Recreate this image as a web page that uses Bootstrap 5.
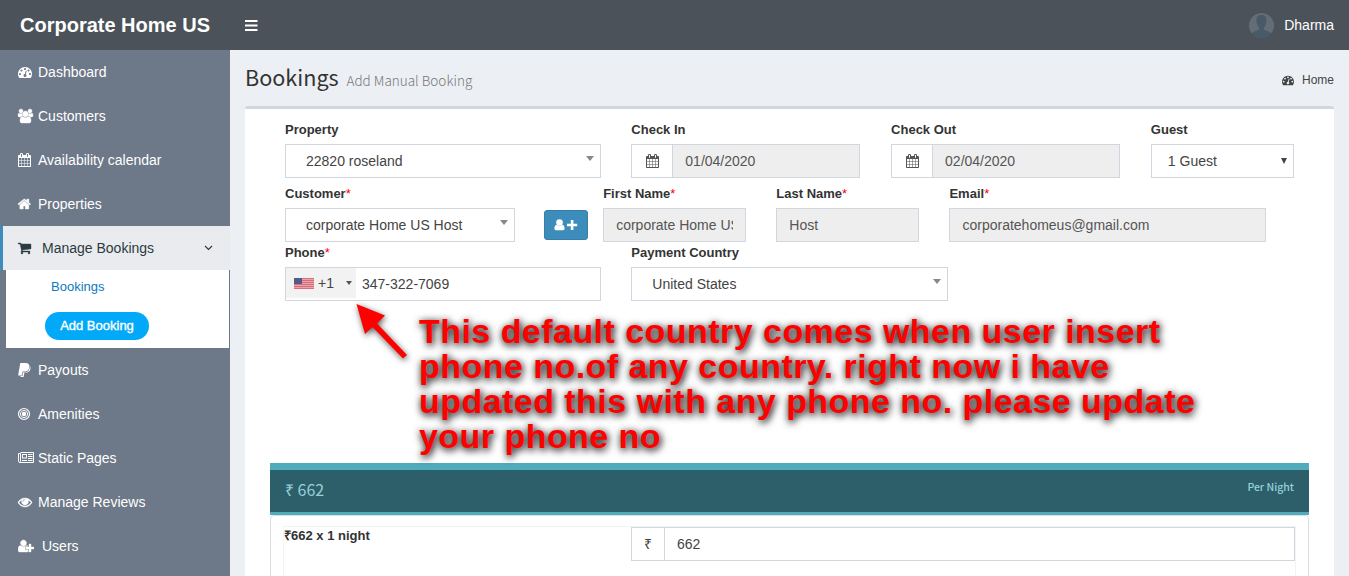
<!DOCTYPE html>
<html lang="en">
<head>
<meta charset="utf-8">
<title>Corporate Home US - Bookings</title>
<meta name="viewport" content="width=device-width, initial-scale=1">
<link href="https://cdn.jsdelivr.net/npm/bootstrap@5.3.0/dist/css/bootstrap.min.css" rel="stylesheet">
<style>
body{font:14px/20px "Liberation Sans",Arial,sans-serif;color:#333;background:#ecf0f5;height:576px;overflow:hidden}
a{text-decoration:none;color:inherit}
.topbar{height:50px;background:#4b5259;color:#fff}
.brand{width:230px;padding-left:20px;font-size:20px;font-weight:700}
.burger{width:13px;height:11px;margin-left:15px}
.user-name{margin:0 15px 0 10px}
.fa{height:14px;width:auto;fill:currentColor;flex:none;display:block;overflow:visible}
.fa.solid{stroke:currentColor;stroke-width:50}
.shell{height:526px}
.sidebar{width:230px;background:#6d7888;color:#fff;flex:none}
.side-link{height:44px;padding-left:18px;display:flex;align-items:center}
.side-ico{width:20px;flex:none}
.side-link.wide .side-ico{width:24px}
.side-link.current{background:#e9ebee;color:#2c3b41;border-left:3px solid #3c8dbc;padding-left:15px}
.submenu{height:78px;margin:0 1px 0 6px;background:#fff;font-size:13px}
.submenu .sub-item{padding:7px 0 0 45px;color:#0b7bbf}
.pill{margin:15px 0 0 39px;width:104px;height:28px;border-radius:14px;background:#03a9f9;color:#fff;-webkit-text-stroke:.35px #fff}
.main{padding:0 15px;min-width:0}
.page-head{height:56px}
.page-head h1{font:21.600px/26px "Noto Sans CJK SC",sans-serif;color:#333;padding-top:14px;margin:0}
.page-head small{font-size:13.500px;font-weight:300;color:#777;margin-left:3px}
.crumb{font-size:12px;color:#444;padding-top:20px;gap:8px}
.panel-box{height:480px;border-top:3px solid #d2d6de;border-radius:3px 3px 0 0;background:#fff;padding:10px 25px 0;position:relative}
.form-rows .row{--bs-gutter-x:30px;margin:0}
.row-a{height:64px}.row-b{height:59px}.row-c{height:221px}
label{display:block;font-size:13px;font-weight:700;padding-top:1px;margin-bottom:4px}
.rate-grid label{padding:0;margin-top:-1px}
label i{color:#f00;font-weight:400;font-style:normal}
.ctl{height:34px;border:1px solid #d2d6de;background:#fff;color:#444;display:flex;align-items:center;padding:0 12px;white-space:nowrap;overflow:hidden}
.ctl.off{background:#eee;color:#555}
.ctl.pick{padding:0 6px 0 20px;justify-content:space-between}
.ctl.date{margin-right:.75px}
.ctl input{border:0;padding:0;width:100%;background:none;color:inherit;font:inherit;outline:0}
.tri{width:0;height:0;border:4px solid transparent;border-top:5px solid #888;border-bottom:0;margin-top:-5px}
.addon{width:41px;height:32px;margin-left:-12px;margin-right:12px;background:#fff;border-right:1px solid #d2d6de;display:flex;align-items:center;justify-content:center;flex:none}
.addon.slim{width:33px}
.add-col{width:58.4px;padding:27px 0 0 14.2px;flex:none}
.btn-add{width:44px;height:30px;border:1px solid #367fa9;border-radius:3px;background:#3c8dbc;color:#fff;padding:0;gap:2px}
.dial{width:70px;height:30px;background:#f2f2f2;align-self:flex-start;margin:0 6px 0 -12px;padding-left:8px;gap:4px;font-size:14px}
.rate-bar{height:52px;border-top:7px solid #50abbb;border-bottom:3px solid #50abbb;background:#2c5f69;color:#96d0da;font:16px/39px "Noto Sans CJK SC",sans-serif;padding:0 15px}
.rate-bar .per{font-size:10.500px;font-weight:500;line-height:33px}
.rate-body{height:80px;border:1px solid #ddd;border-radius:4px;padding:10px 12px 0 12px}
.rate-grid{height:60px;border:1px solid #f3f3f3;display:grid;grid-template-columns:347px 1fr}
.note{position:absolute;left:174px;top:205px;margin:0;color:#f00;font-weight:700;font-size:34px;line-height:35px;letter-spacing:.46px;white-space:nowrap;text-shadow:1px 2px 8px rgba(0,0,0,.75),1px 2px 7px rgba(0,0,0,.6)}
.pointer{position:absolute;left:105px;top:187px;filter:drop-shadow(1px 2px 3px rgba(0,0,0,.65))}
</style>
</head>
<body>
<svg class="d-none">
<symbol id="dash" viewBox="0 0 1792 1792"><path d="M384 1152q0-53-37.500-90.500t-90.500-37.500-90.500 37.500-37.500 90.500 37.500 90.500 90.500 37.500 90.500-37.500 37.500-90.500zm192-448q0-53-37.500-90.500t-90.500-37.500-90.500 37.500-37.500 90.500 37.500 90.500 90.500 37.500 90.500-37.500 37.500-90.500zm428 481l101-382q6-26-7.500-48.500t-38.500-29.500-48 6.500-30 39.500l-101 382q-60 5-107 43.500t-63 98.500q-20 77 20 146t117 89 146-20 89-117q16-60-6-117t-72-91zm660-33q0-53-37.500-90.500t-90.500-37.500-90.500 37.500-37.500 90.500 37.500 90.500 90.500 37.500 90.500-37.500 37.500-90.500zm-640-640q0-53-37.500-90.500t-90.500-37.500-90.500 37.500-37.500 90.500 37.500 90.500 90.500 37.500 90.500-37.500 37.500-90.500zm448 192q0-53-37.500-90.500t-90.500-37.500-90.500 37.500-37.500 90.500 37.500 90.500 90.500 37.500 90.500-37.500 37.500-90.500zm320 448q0 261-141 483-19 29-54 29h-1402q-35 0-54-29-141-221-141-483 0-182 71-348t191-286 286-191 348-71 348 71 286 191 191 286 71 348z"/></symbol>
<symbol id="cal" viewBox="64 0 1664 1792"><path d="M192 1664h288v-288h-288v288zm352 0h320v-288h-320v288zm-352-352h288v-320h-288v320zm352 0h320v-320h-320v320zm-352-384h288v-288h-288v288zm736 736h320v-288h-320v288zm-384-736h320v-288h-320v288zm768 736h288v-288h-288v288zm-384-352h320v-320h-320v320zm-352-864v-288q0-13-9.500-22.500t-22.500-9.500h-64q-13 0-22.500 9.500t-9.500 22.500v288q0 13 9.500 22.500t22.500 9.500h64q13 0 22.500-9.500t9.500-22.500zm736 864h288v-320h-288v320zm-384-384h320v-288h-320v288zm384 0h288v-288h-288v288zm32-480v-288q0-13-9.500-22.500t-22.500-9.500h-64q-13 0-22.500 9.500t-9.500 22.500v288q0 13 9.500 22.500t22.500 9.500h64q13 0 22.500-9.500t9.500-22.500zm384-64v1280q0 52-38 90t-90 38h-1408q-52 0-90-38t-38-90v-1280q0-52 38-90t90-38h128v-96q0-66 47-113t113-47h64q66 0 113 47t47 113v96h384v-96q0-66 47-113t113-47h64q66 0 113 47t47 113v96h128q52 0 90 38t38 90z"/></symbol>
<symbol id="uplus" viewBox="0 0 2048 1792"><path d="M704 896q-159 0-271.500-112.500t-112.500-271.500 112.500-271.500 271.500-112.500 271.500 112.500 112.500 271.500-112.500 271.500-271.500 112.500zm960 128h352q13 0 22.500 9.500t9.500 22.500v192q0 13-9.500 22.500t-22.500 9.500h-352v352q0 13-9.500 22.500t-22.500 9.500h-192q-13 0-22.500-9.500t-9.500-22.500v-352h-352q-13 0-22.500-9.500t-9.500-22.500v-192q0-13 9.500-22.500t22.500-9.500h352v-352q0-13 9.500-22.500t22.500-9.500h192q13 0 22.500 9.500t9.500 22.500v352zm-736 224q0 52 38 90t90 38h256v238q-68 50-171 50h-874q-121 0-194-69t-73-190q0-53 3.500-103.500t14-109 26.500-108.500 43-97.500 62-81 85.500-53.500 111.500-20q19 0 39 17 79 61 154.500 91.500t164.500 30.500 164.500-30.500 154.500-91.500q20-17 39-17 132 0 217 96h-223q-52 0-90 38t-38 90v192z"/></symbol>
</svg>

<header class="topbar d-flex align-items-center">
  <a class="brand" href="#">Corporate Home US</a>
  <svg class="burger" viewBox="0 0 13 11" fill="#fff"><path d="M0 0h12.500v2H0zM0 4.500h12.500v2H0zM0 9h12.500v2H0z"/></svg>
  <svg class="ms-auto" width="25" height="25" viewBox="0 0 25 25"><clipPath id="rnd"><circle cx="12.500" cy="12.500" r="12.500"/></clipPath><g clip-path="url(#rnd)"><path fill="#646c77" d="M0 0h25v25H0z"/><path fill="#485967" d="M12.500 2c-3.700 0-5.300 2.500-5 6 .2 3 1.300 5 2.500 6.200v2.300C8 18 4 18 2.500 21.500V25h20v-3.500C21 18 17 18 15 16.500v-2.300C16.300 13 17.300 11 17.500 8c.3-3.500-1.300-6-5-6z"/></g></svg>
  <span class="user-name">Dharma</span>
</header>

<div class="shell d-flex">
  <nav class="sidebar">
    <a class="side-link" href="#"><span class="side-ico"><svg class="fa" width="14"><use href="#dash"/></svg></span>Dashboard</a>
    <a class="side-link" href="#"><span class="side-ico"><svg class="fa solid" viewBox="-64 0 1920 1792"><path d="M529 896q-162 5-265 128h-134q-82 0-138-40.500t-56-118.500q0-353 124-353 6 0 43.500 21t97.500 42.500 119 21.500q67 0 133-23-5 37-5 66 0 139 81 256zm1071 637q0 120-73 189.500t-194 69.500h-874q-121 0-194-69.500t-73-189.500q0-53 3.500-103.500t14-109 26.500-108.500 43-97.500 62-81 85.500-53.500 111.500-20q10 0 43 21.500t73 48 107 48 135 21.500 135-21.500 107-48 73-48 43-21.500q61 0 111.500 20t85.500 53.500 62 81 43 97.500 26.500 108.500 14 109 3.500 103.500zm-1024-1277q0 106-75 181t-181 75-181-75-75-181 75-181 181-75 181 75 75 181zm704 384q0 159-112.500 271.500t-271.500 112.500-271.500-112.500-112.500-271.500 112.500-271.500 271.500-112.500 271.500 112.500 112.500 271.500zm576 225q0 78-56 118.500t-138 40.500h-134q-103-123-265-128 81-117 81-256 0-29-5-66 66 23 133 23 59 0 119-21.500t97.500-42.500 43.500-21q124 0 124 353zm-128-609q0 106-75 181t-181 75-181-75-75-181 75-181 181-75 181 75 75 181z"/></svg></span>Customers</a>
    <a class="side-link" href="#"><span class="side-ico"><svg class="fa" width="13"><use href="#cal"/></svg></span>Availability calendar</a>
    <a class="side-link" href="#"><span class="side-ico"><svg class="fa solid" viewBox="90 0 1664 1792"><path d="M1472 992v480q0 26-19 45t-45 19h-384v-384h-256v384h-384q-26 0-45-19t-19-45v-480q0-1 .5-3t.5-3l575-474 575 474q1 2 1 6zm223-69l-62 74q-8 9-21 11h-3q-13 0-21-7l-692-577-692 577q-12 8-24 7-13-2-21-11l-62-74q-8-10-7-23.500t11-21.500l719-599q32-26 76-26t76 26l244 204v-195q0-14 9-23t23-9h192q14 0 23 9t9 23v408l219 182q10 8 11 21.500t-7 23.500z"/></svg></span>Properties</a>
    <a class="side-link wide current" href="#"><span class="side-ico"><svg class="fa solid" viewBox="64 0 1664 1792"><path d="M704 1536q0 52-38 90t-90 38-90-38-38-90 38-90 90-38 90 38 38 90zm896 0q0 52-38 90t-90 38-90-38-38-90 38-90 90-38 90 38 38 90zm128-1088v512q0 24-16.500 42.500t-40.500 21.500l-1044 122q13 60 13 70 0 16-24 64h920q26 0 45 19t19 45-19 45-45 19h-1024q-26 0-45-19t-19-45q0-11 8-31.500t16-36 21.500-40 15.500-29.500l-177-823h-204q-26 0-45-19t-19-45 19-45 45-19h256q16 0 28.500 6.500t19.500 15.500 13 24.500 8 26 5.500 29.500 4.500 26h1201q26 0 45 19t19 45z"/></svg></span>Manage Bookings
      <svg class="ms-auto me-3" width="10" height="6" viewBox="0 0 10 6" fill="none" stroke="currentColor" stroke-width="1.200"><path d="M1 1L4.500 4.500 8 1"/></svg></a>
    <div class="submenu">
      <a class="sub-item d-block" href="#">Bookings</a>
      <a class="pill d-flex align-items-center justify-content-center" href="#">Add Booking</a>
    </div>
    <a class="side-link" href="#"><span class="side-ico"><svg class="fa" width="13" viewBox="0 0 13 14"><path d="M2.300 0h5.200c3.100 0 4.400 1.700 3.800 4.400C10.700 7.500 8.700 8.600 6 8.600H4.600L3.800 12.500H.1z"/><path d="M11.900 3.200c.6.700.7 1.600.5 2.700-.6 2.700-2.300 3.700-4.800 3.700H6.500L5.600 14H2.500l.2-.9h1.700l.8-3.900h1.500c3 0 4.800-1.500 5.200-6z"/></svg></span>Payouts</a>
    <a class="side-link" href="#"><span class="side-ico"><svg class="fa" viewBox="0 0 12 14"><g fill="none" stroke="currentColor"><circle cx="6" cy="7" r="5.500" stroke-width="1.200"/><circle cx="6" cy="7" r="3.600" stroke-width="1"/></g><circle cx="6" cy="7" r="2.200"/></svg></span>Amenities</a>
    <a class="side-link" href="#"><span class="side-ico"><svg class="fa" width="16" viewBox="0 0 16 14"><path fill="none" stroke="currentColor" d="M2.500 1.500h13v10H1.700C.9 11.500.5 11 .5 10.300V2.500h2M2.500 2.500v7.800c0 .8-.4 1.200-1 1.200"/><path fill-rule="evenodd" d="M4 3h5v4.500H4zM5 4v2.500h3V4zM10 3h4.500v1H10zM10 5h4.500v1H10zM10 7h4.500v1H10zM4 9h5v1H4zM10 9h4.500v1H10z"/></svg></span>Static Pages</a>
    <a class="side-link" href="#"><span class="side-ico"><svg class="fa solid" viewBox="0 0 1792 1792"><path d="M1664 960q-152-236-381-353 61 104 61 225 0 185-131.500 316.500t-316.500 131.500-316.500-131.500-131.500-316.500q0-121 61-225-229 117-381 353 133 205 333.500 326.500t434.500 121.500 434.500-121.500 333.500-326.500zm-720-384q0-20-14-34t-34-14q-125 0-214.500 89.500t-89.500 214.500q0 20 14 34t34 14 34-14 14-34q0-86 61-147t147-61q20 0 34-14t14-34zm848 384q0 34-20 69-140 230-376.500 368.500t-499.500 138.500-499.500-139-376.500-368q-20-35-20-69t20-69q140-229 376.500-368t499.500-139 499.500 139 376.500 368q20 35 20 69z"/></svg></span>Manage Reviews</a>
    <a class="side-link wide" href="#"><span class="side-ico"><svg class="fa solid" width="16"><use href="#uplus"/></svg></span>Users</a>
  </nav>

  <main class="main flex-grow-1">
    <div class="page-head d-flex justify-content-between">
      <h1>Bookings <small>Add Manual Booking</small></h1>
      <div class="crumb d-flex align-items-start"><svg class="fa mt-1" width="12" style="height:12px"><use href="#dash"/></svg><span>Home</span></div>
    </div>
    <section class="panel-box">
      <form class="form-rows">
        <div class="row row-a">
          <div class="col-4"><label>Property</label><div class="ctl pick">22820 roseland<b class="tri"></b></div></div>
          <div class="col-3"><label>Check In</label><div class="ctl off date"><span class="addon"><svg class="fa" width="13"><use href="#cal"/></svg></span>01/04/2020</div></div>
          <div class="col-3"><label>Check Out</label><div class="ctl off date"><span class="addon"><svg class="fa" width="13"><use href="#cal"/></svg></span>02/04/2020</div></div>
          <div class="col-2"><label>Guest</label><div class="ctl pick" style="padding-left:16px">1 Guest<svg width="6" height="6" fill="#444"><path d="M0 0h6L3 6z"/></svg></div></div>
        </div>
        <div class="row row-b flex-nowrap">
          <div class="col-3"><label>Customer<i>*</i></label><div class="ctl pick">corporate Home US Host<b class="tri"></b></div></div>
          <div class="add-col"><button type="button" class="btn-add d-flex align-items-center justify-content-center"><svg width="24" height="14" viewBox="0 0 24 14" fill="#fff"><circle cx="5.500" cy="4.500" r="3.300"/><path d="M2.600 6.700C.9 7 .4 9 .4 10.600.4 11.800 1 12.300 2 12.300h7c1 0 1.600-.5 1.600-1.700 0-1.600-.5-3.600-2.200-3.900-1.500 1.500-4.300 1.500-5.800 0zM16.800 2h2.600v3.700h3.800v2.600h-3.800V12h-2.600V8.300H13V5.700h3.800z"/></svg></button></div>
          <div class="col-2"><label>First Name<i>*</i></label><div class="ctl off"><input value="corporate Home US" readonly></div></div>
          <div class="col-2"><label>Last Name<i>*</i></label><div class="ctl off">Host</div></div>
          <div class="col-4"><label>Email<i>*</i></label><div class="ctl off">corporatehomeus@gmail.com</div></div>
        </div>
        <div class="row row-c align-content-start">
          <div class="col-4"><label>Phone<i>*</i></label><div class="ctl"><span class="dial d-flex align-items-center">
            <svg width="20" height="11" viewBox="0 0 20 11"><path fill="#e9a3aa" d="M0 0h20v11H0z"/><path stroke="#d5707a" d="M0 .5h20M0 2.500h20M0 4.500h20M0 6.500h20M0 8.500h20M0 10.500h20"/><path fill="#55598a" d="M0 0h8v6H0z"/></svg>+1<svg class="ms-auto me-1" width="6" height="4" fill="#555"><path d="M0 0h6L3 4z"/></svg></span>347-322-7069</div></div>
          <div class="col-4"><label>Payment Country</label><div class="ctl pick">United States<b class="tri"></b></div></div>
        </div>
      </form>
      <div class="rate-bar d-flex justify-content-between"><span>₹ 662</span><span class="per">Per Night</span></div>
      <div class="rate-body"><div class="rate-grid"><label>₹662 x 1 night</label><div class="ctl"><span class="addon slim">₹</span>662</div></div></div>
      <svg class="pointer" width="60" height="65" viewBox="0 0 60 65"><path fill="#f00" d="M6.500 8L35 19.500 27 27.500 57 59 53 62.500 22.500 31 15 38z"/></svg>
      <p class="note">This default country comes when user insert<br>phone no.of any country. right now i have<br>updated this with any phone no. please update<br>your phone no</p>
    </section>
  </main>
</div>
<script src="https://cdn.jsdelivr.net/npm/bootstrap@5.3.0/dist/js/bootstrap.bundle.min.js"></script>
</body>
</html>
